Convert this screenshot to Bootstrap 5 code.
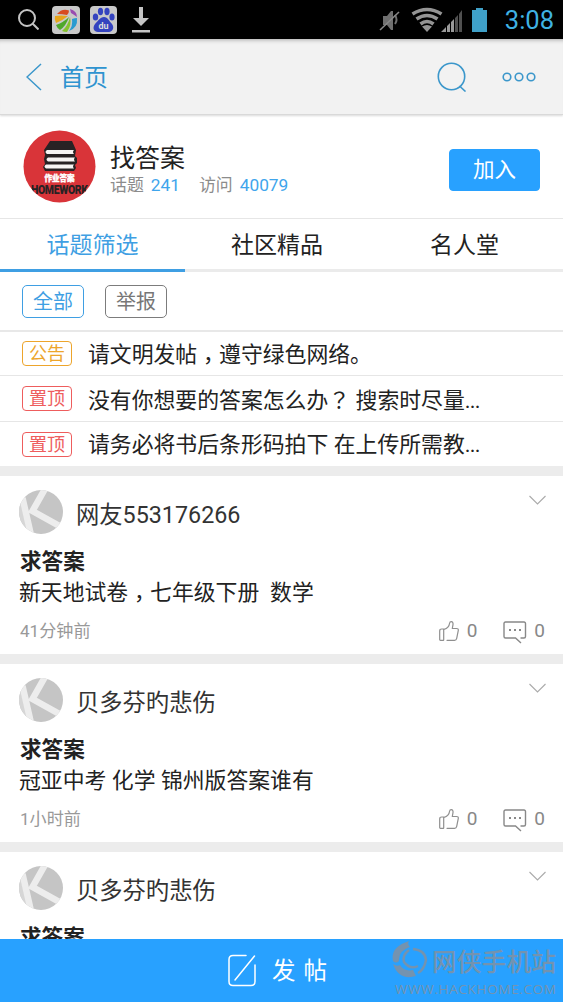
<!DOCTYPE html>
<html lang="zh-CN">
<head>
<meta charset="utf-8">
<meta name="viewport" content="width=device-width, initial-scale=1">
<title>找答案</title>
<link rel="stylesheet" href="https://cdn.jsdelivr.net/npm/bootstrap@5.3.0/dist/css/bootstrap.min.css">
<style>
:root { --sky: #28a1ff; --ink: #222; --teal: #3b97cb; }
body { font-family: Roboto, "Noto Sans CJK SC", sans-serif; font-weight: 400; color: var(--ink); background: #fff; line-height: 1; }
svg { display: block; flex: none; }
.screen { height: 1002px; }
.statusbar { height: 39px; background: #000; padding: 0 9px 0 18px; }
.clock { font-size: 25.5px; color: #3fb2e3; line-height: 39px; margin: 2px 0 0 16px; }
.tray { margin-left: 13px; }
.topbar { height: 76px; background: #f2f2f2; padding: 0 27px 0 26px; border-bottom: 1px solid #d9d9d9; box-shadow: 0 1px 2px rgba(0,0,0,.15), inset 0 5px 4px -4px rgba(0,0,0,.3); color: var(--teal); }
.topbar h1 { font-size: 24px; margin: 0 0 0 18px; padding-top: 3px; line-height: 30px; font-weight: 400; color: #2f94d0; }
.more { margin-left: 35px; }
.profile { height: 104px; padding: 0 23px; border-bottom: 1px solid #e6e6e6; }
.profile h2 { font-size: 25px; line-height: 30px; margin: 0; font-weight: 400; }
.title-box { margin-left: 14px; padding-top: 8px; }
.stats { font-size: 16.9px; line-height: 23px; color: #8c8c8c; gap: 7px; }
.stats b { font-weight: 400; font-size: 17.3px; color: #3fa5ec; }
.visits { margin-left: 12px; }
.join { --bs-btn-bg: #28a1ff; --bs-btn-border-color: #28a1ff; --bs-btn-color: #fff; width: 91px; height: 42px; font-size: 21.5px; line-height: 1; padding: 1px 0 0; border-radius: 4px; margin-top: 6px; }
.tabs { height: 53px; }
.tabs a { font-size: 23px; color: #222; text-decoration: none; border-bottom: 3px solid #ebebeb; line-height: 47px; padding-top: 3px; }
.tabs a.current { color: #3f9fe3; border-color: #3f9fe3; }
.tabs .t1 { width: 185px; } .tabs .t2 { width: 184px; }
.tabs .t3 { padding-right: 3px; }
.chips { height: 60px; padding: 0 22px; gap: 21px; border-bottom: 2px solid #e8e8e8; }
.chip { width: 62px; height: 33px; border: 1.5px solid #7c7c7c; color: #777; border-radius: 5px; font-size: 20px; line-height: 32px; text-align: center; }
.chip.current { border-color: #3f9fe3; color: #3f9fe3; }
.notices { margin-top: -1px; }
.notice { height: 45.3px; padding: 1px 22px 0; border-bottom: 1px solid #e6e6e6; font-size: 21.85px; white-space: pre; }
.notice .line { padding-top: 1px; }
.notice:last-child { border: 0; height: 44.7px; }
.tag { width: 50px; height: 25px; border: 1.5px solid; border-radius: 4px; font-size: 18px; line-height: 24px; text-align: center; margin-right: 16px; flex: none; }
.tag.news { color: #eda52c; } .tag.pin { color: #ee5d5d; }
.mid { font-family: "Noto Sans CJK TC", sans-serif; line-height: 1; }
.low { position: relative; top: .26em; }
.dots { letter-spacing: -.8px; }
.post { border-top: 10px solid #ececec; height: 188px; padding: 14px 19px 0; }
.who { font-size: 23.3px; line-height: 44px; margin-left: 13px; padding-top: 3px; color: #333; }
.chev { margin: 5px -3px 0 auto; }
.post h3 { font-size: 21.6px; font-weight: 700; line-height: 31px; margin: 9px 0 0; padding-left: 1px; }
.post p { font-size: 21.85px; line-height: 32px; height: 32px; margin: 0; white-space: pre; }
.meta { font-size: 17.1px; line-height: 22px; color: #999; margin: 8px -1px 0 1px; }
.meta .num { font-size: 19px; color: #888; margin-left: 7px; }
.talk { margin: 4px 0 0 26px; }
.composer { height: 63px; background: var(--sky); color: #fff; }
.composer .label { font-size: 23.5px; letter-spacing: 8px; padding-top: 2px; }
.stamp { right: 5px; bottom: 3px; width: 166px; color: #7493af; }
.stamp .cn { font-size: 24.5px; font-weight: 500; }
.stamp .en { font: 13.5px "Open Sans", sans-serif; }
</style>
</head>
<body>
<svg width="0" height="0" class="position-absolute">
  <defs>
    <clipPath id="disc"><circle cx="22" cy="22" r="22"/></clipPath>
    <g id="avatar" clip-path="url(#disc)">
      <path fill="#c5c5c5" d="M0 0h44v44H0z"/>
      <path d="M-1 13L7 45" fill="none" stroke="#d6d6d6" stroke-width="5"/>
      <path d="M3.500 8L12 45M26.500-2L13.500 21 43 37.500" fill="none" stroke="#ededed" stroke-width="6.500"/>
    </g>
    <g id="chev"><path d="M.5 1l8 8 8-8" fill="none" stroke="#aaa" stroke-width="1.1"/></g>
    <g id="like" fill="none" stroke="#8f8f8f" stroke-width="1.2" stroke-linejoin="round" stroke-linecap="round">
      <path d="M4.500 19.300H1.500Q.7 19.300.7 18.500V10q0-2 2-2h2v11M5 8.300Q10 7 10.500 2.500 10.800.7 12.300.7q2 0 1.700 3L13.300 7.500h4.200q2 0 1.800 1.800l-1.600 8q-.4 2-2.200 2H8"/>
    </g>
    <g id="talk">
      <path d="M17.500 17H21q1.500 0 1.500-1.500V2.500Q22.500 1 21 1H2.500Q1 1 1 2.500v13Q1 17 2.500 17H12.500l5.500 5" fill="none" stroke="#888" stroke-width="1.4"/>
      <path d="M6 8h2v2H6zM11 8h2v2h-2zM16 8h2v2h-2z" fill="#888"/>
    </g>
  </defs>
</svg>

<div class="screen d-flex flex-column overflow-hidden">
  <header class="flex-shrink-0">
    <div class="statusbar d-flex align-items-center">
      <svg width="21" height="21" viewBox="0 0 21 21" fill="none" stroke="#c4c4c4" stroke-width="2"><circle cx="9" cy="9" r="8"/><path d="M14.500 14.500l6 6"/></svg>
      <svg class="tray me-auto" width="103" height="28" viewBox="0 0 103 28">
        <rect width="28" height="28" rx="4" fill="#c9c9c9"/>
        <path fill="#d84b20" d="M5 8Q10 2 17 4.500q0 3-2 4.500-5-1-10-1z"/><path fill="#9a4bb0" d="M18 3q7 2 7 8-4-3-6-4z"/>
        <path fill="#e8a51b" d="M3 10q6-1 13 0-6 5-12 7-2-4-1-7z"/><path fill="#4fa82b" d="M4 19q8-3 13-8-3 9-9 13-3-2-4-5z"/><path fill="#86c22e" d="M10 25q6-5 8-14 2 8-3 15-3 0-5-1z"/><path fill="#2a9bd0" d="M17 25q4-5 3-12 3-1 5-1 1 10-8 13z"/>
        <rect x="38" width="27" height="28" rx="4" fill="#c9c9c9"/>
        <g fill="#3443bf"><ellipse cx="43.500" cy="11" rx="2.700" ry="3.500"/><ellipse cx="48.500" cy="5.500" rx="2.600" ry="3.700"/><ellipse cx="55" cy="5.500" rx="2.600" ry="3.700"/><ellipse cx="60" cy="11" rx="2.600" ry="3.500"/><path d="M52 11c4 0 5 4 8 7 3 4 0 8-3 8H46c-4 0-6-4-3-8 3-3 5-7 9-7z"/></g>
        <text x="51.500" y="22.500" font-size="9" font-weight="700" fill="#ddd" text-anchor="middle">du</text>
        <path fill="#c4c4c4" d="M87 1h4v11h6l-8 8-8-8h6zM80 24h18v2.500H80z"/>
      </svg>
      <svg width="112" height="28" viewBox="0 0 112 28">
        <path fill="#6f6f6f" d="M6 10h4l4-5h2v19h-2l-4-5H6z"/><path d="M18 9q3 5 0 9" fill="none" stroke="#6f6f6f" stroke-width="2"/><path d="M3 24L22 6" stroke="#888" stroke-width="1.600"/>
        <g fill="none" stroke="#949494" stroke-width="3.600"><path d="M35.500 8q14.500-9 29 0"/><path d="M39.500 13q10.500-7 21 0"/><path d="M43.500 18q6.500-5 13 0"/></g><path fill="#949494" d="M45 20.500q5-3 10 0l-5 5.500z"/>
        <path fill="#999" d="M64 26l5-5v5zM70 20l3-3v9h-3zM74 16l3-3v13h-3z"/><path fill="#505050" d="M78 12l3-3v17h-3zM82 8l3-4v22h-3z"/>
        <path fill="#3fa0c8" d="M95 4h4V2h7v2h4v22H95z"/>
      </svg>
      <span class="clock">3:08</span>
    </div>
    <nav class="topbar d-flex align-items-center">
      <svg width="16" height="28" viewBox="0 0 16 28" fill="none" stroke="currentColor" stroke-width="1.500"><path d="M15 1L1 14l14 13"/></svg>
      <h1>首页</h1>
      <svg class="ms-auto" width="30" height="30" viewBox="0 0 30 30" fill="none" stroke="currentColor" stroke-width="1.600"><circle cx="14.500" cy="14.500" r="13.200"/><path d="M22.500 24l6 5.500"/></svg>
      <svg class="more" width="34" height="10" viewBox="0 0 34 10" fill="none" stroke="currentColor" stroke-width="1.600"><circle cx="5" cy="5" r="3.800"/><circle cx="17" cy="5" r="3.800"/><circle cx="29" cy="5" r="3.800"/></svg>
    </nav>
  </header>

  <section class="profile d-flex align-items-center flex-shrink-0">
    <svg width="73" height="73" viewBox="0 0 73 73">
      <clipPath id="logo"><circle cx="36.500" cy="36.500" r="36"/></clipPath>
      <g clip-path="url(#logo)">
        <path fill="#d93439" d="M0 0h73v73H0z"/>
        <path fill="#282224" d="M27 11h22l4 9-1 6 2 2v5l-2 2 1 3-2 3H22l-2-4 2-3-1-5 1-4-1-5z"/>
        <path fill="#f7f4f4" d="M24 20h27q-2 2 0 4H24q-3-2 0-4zM25 27.500h27q-2 2 0 4H25q-3-2 0-4zM23 34.500h28q-2 2 0 4H23q-3-2 0-4z"/>
        <text x="36.500" y="51" text-anchor="middle" font-size="7.500" font-weight="900" fill="#fff" stroke="#fff" stroke-width=".4">作业答案</text>
        <text transform="translate(36.500 63.500) scale(.84 1)" text-anchor="middle" font-size="12.500" font-weight="900" textLength="68" fill="#282224">HOMEWORK</text>
      </g>
    </svg>
    <div class="title-box">
      <h2>找答案</h2>
      <div class="stats d-flex"><span>话题</span><b>241</b><span class="visits">访问</span><b>40079</b></div>
    </div>
    <button class="btn join ms-auto">加入</button>
  </section>

  <nav class="tabs d-flex text-center flex-shrink-0">
    <a class="t1 current" href="#">话题筛选</a><a class="t2" href="#">社区精品</a><a class="t3 flex-grow-1" href="#">名人堂</a>
  </nav>
  <div class="chips d-flex align-items-center flex-shrink-0">
    <span class="chip current">全部</span><span class="chip">举报</span>
  </div>
  <div class="notices flex-shrink-0">
    <div class="notice d-flex align-items-center"><span class="tag news">公告</span><span class="line">请文明发帖<span class="mid low" lang="zh-TW">，</span>遵守绿色网络。</span></div>
    <div class="notice d-flex align-items-center"><span class="tag pin">置顶</span><span class="line">没有你想要的答案怎么办<span class="mid" lang="zh-TW">？</span> 搜索时尽量<span class="dots">...</span></span></div>
    <div class="notice d-flex align-items-center"><span class="tag pin">置顶</span><span class="line">请务必将书后条形码拍下 在上传所需教<span class="dots">...</span></span></div>
  </div>

  <main class="flex-grow-1 overflow-hidden" style="min-height:0">
    <article class="post">
      <div class="d-flex"><svg width="44" height="44"><use href="#avatar"/></svg><span class="who">网友553176266</span><svg class="chev" width="18" height="10"><use href="#chev"/></svg></div>
      <h3>求答案</h3>
      <p>新天地试卷<span class="mid low" lang="zh-TW">，</span>七年级下册  数学</p>
      <div class="meta d-flex align-items-center"><span>41分钟前</span><svg class="ms-auto" width="21" height="20"><use href="#like"/></svg><span class="num">0</span><svg class="talk" width="24" height="23"><use href="#talk"/></svg><span class="num">0</span></div>
    </article>
    <article class="post">
      <div class="d-flex"><svg width="44" height="44"><use href="#avatar"/></svg><span class="who">贝多芬旳悲伤</span><svg class="chev" width="18" height="10"><use href="#chev"/></svg></div>
      <h3>求答案</h3>
      <p>冠亚中考 化学 锦州版答案谁有</p>
      <div class="meta d-flex align-items-center"><span>1小时前</span><svg class="ms-auto" width="21" height="20"><use href="#like"/></svg><span class="num">0</span><svg class="talk" width="24" height="23"><use href="#talk"/></svg><span class="num">0</span></div>
    </article>
    <article class="post">
      <div class="d-flex"><svg width="44" height="44"><use href="#avatar"/></svg><span class="who">贝多芬旳悲伤</span><svg class="chev" width="18" height="10"><use href="#chev"/></svg></div>
      <h3>求答案</h3>
    </article>
  </main>

  <footer class="composer position-relative d-flex align-items-center justify-content-center flex-shrink-0">
    <svg class="me-3" width="28" height="33" viewBox="0 0 28 33" fill="none" stroke="#fff" stroke-width="1.500" stroke-linecap="round"><path d="M18 1.500H5Q1 1.500 1 5.500v22q0 4 4 4h18q4 0 4-4V11M26.500 2L7 26"/></svg>
    <span class="label">发帖</span>
    <div class="stamp position-absolute">
      <div class="d-flex align-items-end">
        <svg width="37" height="38" viewBox="0 0 37 38"><g fill="currentColor"><path d="M17 0Q-2 6 1 20q3 3 6 0Q6 10 18 6q-3-3-1-6z"/><path d="M1 23q6 17 23 12l-3-6Q12 31 8 24q-3 2-7-1z"/></g><path fill="none" stroke="currentColor" stroke-width="2.500" d="M17 9q-7 5-5 12 6 8 14 4M21 8q12 1 13 11-2 10-8 13"/></svg>
        <svg width="128" height="34"><text class="cn" x="3" y="26" textLength="124" fill="currentColor">网侠手机站</text></svg>
      </div>
      <svg width="166" height="20"><text class="en" x="3" y="15" textLength="161" fill="currentColor">WWW.HACKHOME.COM</text></svg>
    </div>
  </footer>
</div>
<script src="https://cdn.jsdelivr.net/npm/bootstrap@5.3.0/dist/js/bootstrap.bundle.min.js"></script>
</body>
</html>
